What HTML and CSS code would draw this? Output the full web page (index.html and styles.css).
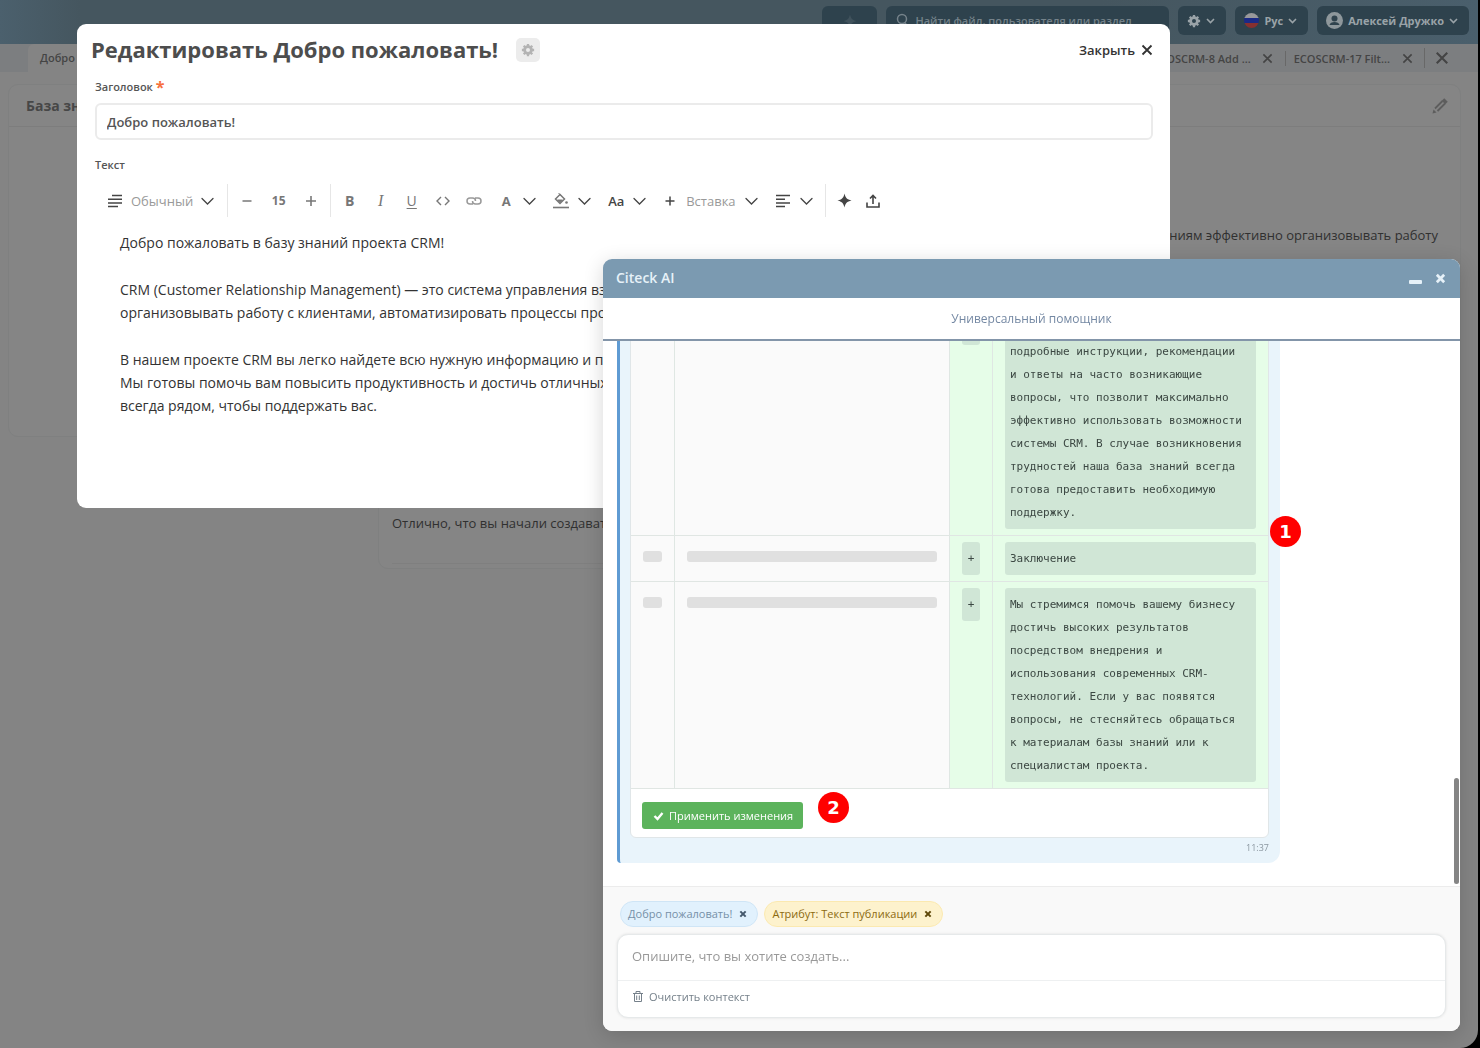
FILE: index.html
```html
<!DOCTYPE html>
<html lang="ru">
<head>
<meta charset="utf-8">
<meta name="viewport" content="width=device-width, initial-scale=1">
<title>Редактировать Добро пожаловать!</title>
<link rel="stylesheet" href="styles.css">
</head>
<body>
<svg class="sprite" aria-hidden="true">
  <symbol id="chevron" viewBox="0 0 13 13"><path d="M1 4.500l5.500 5.500L12 4.500" fill="none" stroke="currentColor" stroke-width="1.300" stroke-linecap="round"/></symbol>
  <symbol id="caret" viewBox="0 0 9 9"><path d="M1 3l3.500 3.500L8 3" fill="none" stroke="currentColor" stroke-width="1.600"/></symbol>
  <symbol id="cross" viewBox="0 0 12 12"><path d="M1.500 1.500l9 9M10.500 1.500l-9 9" fill="none" stroke="currentColor" stroke-width="1.800"/></symbol>
  <symbol id="boldcross" viewBox="0 0 12 12"><path d="M2 2l8 8M10 2l-8 8" fill="none" stroke="currentColor" stroke-width="3"/></symbol>
  <symbol id="star" viewBox="0 0 16 16"><path d="M8 0.500c1 4.500 2.500 6.400 7.500 7.500-5 1.100-6.500 3-7.500 7.500-1-4.500-2.500-6.400-7.500-7.500 5-1.100 6.500-3 7.500-7.500z" fill="currentColor"/></symbol>
  <symbol id="gear" viewBox="0 0 16 16"><circle cx="8" cy="8" r="3.900" fill="none" stroke="currentColor" stroke-width="3.200"/><path d="M8 1v3M8 12v3M1 8h3M12 8h3M3.100 3.100l2 2M10.900 10.900l2 2M12.900 3.100l-2 2M5.100 10.900l-2 2" stroke="currentColor" stroke-width="2.600"/></symbol>
</svg>

<div class="app">
  <header class="topbar">
    <button class="top-btn top-star" type="button" aria-label="Помощник"><svg width="14" height="14"><use href="#star"/></svg></button>
    <label class="search">
      <svg width="14" height="16" viewBox="0 0 14 16"><circle cx="7" cy="6" r="4.500" fill="none" stroke="currentColor" stroke-width="1.500"/><path d="M10 10l3 4" stroke="currentColor" stroke-width="1.500"/></svg>
      <input type="search" placeholder="Найти файл, пользователя или раздел" aria-label="Поиск">
    </label>
    <button class="top-btn" type="button" aria-label="Настройки"><svg width="14" height="14"><use href="#gear"/></svg><svg width="9" height="9"><use href="#caret"/></svg></button>
    <button class="top-btn" type="button"><svg width="15" height="15" viewBox="0 0 15 15"><clipPath id="round"><circle cx="7.500" cy="7.500" r="7.500"/></clipPath><g clip-path="url(#round)"><path d="M0 0h15v5H0z" fill="#98989a"/><path d="M0 5h15v5H0z" fill="#1b2a86"/><path d="M0 10h15v5H0z" fill="#863030"/></g></svg>Рус<svg width="9" height="9"><use href="#caret"/></svg></button>
    <button class="top-btn" type="button"><svg width="17" height="17" viewBox="0 0 17 17"><circle cx="8.500" cy="8.500" r="8.500" fill="#8e979b"/><circle cx="8.500" cy="6.500" r="3" fill="#30434d"/><path d="M3.500 13c.5-4 9.500-4 10 0z" fill="#30434d"/></svg>Алексей Дружко<svg width="9" height="9"><use href="#caret"/></svg></button>
  </header>

  <nav class="tabs" aria-label="Вкладки">
    <a class="tab tab-active" href="#">Добро пожаловать!</a>
    <span class="tabs-space"></span>
    <a class="tab" href="#">ECOSCRM-8 Add ...</a>
    <button class="tab-close" type="button" aria-label="Закрыть вкладку"><svg width="11" height="11"><use href="#cross"/></svg></button>
    <a class="tab tab-divided" href="#">ECOSCRM-17 Filt...</a>
    <button class="tab-close" type="button" aria-label="Закрыть вкладку"><svg width="11" height="11"><use href="#cross"/></svg></button>
    <button class="tab-close tab-close-all" type="button" aria-label="Закрыть все"><svg width="14" height="14"><use href="#cross"/></svg></button>
  </nav>

  <main class="board">
    <section class="tile tile-side">
      <h2 class="tile-head">База знаний</h2>
    </section>
    <section class="tile tile-main">
      <div class="tile-head tile-head-end">
        <button class="edit" type="button" aria-label="Редактировать"><svg width="16" height="16" viewBox="0 0 16 16" fill="none" stroke="currentColor"><path d="M3 10.500L10.500 3M5.500 13L13 5.500" stroke-width="1.800"/><path d="M11 1.500l3.500 3.500" stroke-width="3.500"/><path d="M.5 15.500l1-4 3 3z" fill="currentColor" stroke="none"/></svg></button>
      </div>
      <p class="tile-lead">CRM — это система управления взаимоотношениями с клиентами, которая помогает компаниям эффективно организовывать работу</p>
      <p class="tile-note">Отлично, что вы начали создавать базу знаний</p>
    </section>
  </main>
</div>

<div class="modal" role="dialog" aria-labelledby="modal-title">
  <div class="modal-head">
    <h1 class="modal-title" id="modal-title">Редактировать Добро пожаловать!</h1>
    <button class="modal-gear" type="button" aria-label="Настройки формы"><svg width="14" height="14"><use href="#gear"/></svg></button>
    <button class="modal-close" type="button">Закрыть<svg width="12" height="12"><use href="#cross"/></svg></button>
  </div>
  <label class="field-label" for="title-field">Заголовок <span class="required">*</span></label>
  <input class="field" id="title-field" type="text" value="Добро пожаловать!">
  <div class="field-label text-label" id="text-label">Текст</div>

  <div class="toolbar" role="toolbar" aria-label="Форматирование">
    <button class="menu menu-block" type="button"><svg class="dark" width="16" height="14" viewBox="0 0 16 14"><path d="M5 1.500h10M1 5.200h14M1 8.900h14M1 12.500h10" stroke="currentColor" stroke-width="1.500"/></svg><span class="menu-text">Обычный</span><svg class="dark" width="13" height="13"><use href="#chevron"/></svg></button>
    <div class="sizes">
      <button class="tool" type="button" aria-label="Уменьшить"><svg width="10" height="10" viewBox="0 0 10 10"><path d="M0.500 5h9" stroke="currentColor" stroke-width="1.700"/></svg></button>
      <input class="size" type="text" value="15" aria-label="Размер шрифта">
      <button class="tool" type="button" aria-label="Увеличить"><svg width="10" height="10" viewBox="0 0 10 10"><path d="M0 5h10M5 0v10" stroke="currentColor" stroke-width="1.600"/></svg></button>
    </div>
    <div class="tools">
      <button class="tool" type="button">B</button>
      <button class="tool tool-italic" type="button">I</button>
      <button class="tool tool-under" type="button">U</button>
      <button class="tool" type="button" aria-label="Код"><svg width="14" height="10" viewBox="0 0 14 10"><path d="M5 1L1 5l4 4M9 1l4 4-4 4" fill="none" stroke="currentColor" stroke-width="1.400"/></svg></button>
      <button class="tool tool-light" type="button" aria-label="Ссылка"><svg width="16" height="10" viewBox="0 0 16 10"><path d="M7 8H4a3 3 0 0 1 0-6h2.500a3 3 0 0 1 3 3M9 2h3a3 3 0 0 1 0 6H9.500a3 3 0 0 1-3-3" fill="none" stroke="currentColor" stroke-width="1.500"/></svg></button>
    </div>
    <div class="menus">
      <button class="menu" type="button" aria-label="Цвет текста"><span class="glyph glyph-bold">A</span><svg class="dark" width="13" height="13"><use href="#chevron"/></svg></button>
      <button class="menu" type="button" aria-label="Цвет фона"><svg width="16" height="17" viewBox="0 0 16 17"><path d="M7 2.500l4.500 4.500L7 11.500 2.500 7z" fill="none" stroke="currentColor" stroke-width="1.500"/><path d="M5.500 1L8 3.500M4.500 8h5L7 10.500z" fill="currentColor" stroke="currentColor"/><circle cx="13.500" cy="10.500" r="1.300" fill="currentColor"/><path d="M0 15.500h16" stroke="currentColor" stroke-width="1.600"/></svg><svg class="dark" width="13" height="13"><use href="#chevron"/></svg></button>
      <button class="menu" type="button" aria-label="Регистр"><span class="glyph dark">Aa</span><svg class="dark" width="13" height="13"><use href="#chevron"/></svg></button>
      <button class="menu" type="button"><svg class="dark" width="14" height="14" viewBox="0 0 14 14"><path d="M7 2.500v9M2.500 7h9" stroke="currentColor" stroke-width="1.500"/></svg><span class="menu-text">Вставка</span><svg class="dark" width="13" height="13"><use href="#chevron"/></svg></button>
      <button class="menu" type="button" aria-label="Выравнивание"><svg class="dark" width="16" height="14" viewBox="0 0 16 14"><path d="M1 1.500h14M1 5.200h9M1 8.900h14M1 12.500h9" stroke="currentColor" stroke-width="1.500"/></svg><svg class="dark" width="13" height="13"><use href="#chevron"/></svg></button>
    </div>
    <div class="extras">
      <button class="tool tool-narrow dark" type="button" aria-label="AI"><svg width="15" height="15"><use href="#star"/></svg></button>
      <button class="tool tool-narrow dark" type="button" aria-label="Загрузить"><svg width="14" height="14" viewBox="0 0 14 14"><path d="M7 10V2M4 4.500l3-3 3 3M1 8.500V13h12V8.500" fill="none" stroke="currentColor" stroke-width="1.600"/></svg></button>
    </div>
  </div>

  <div class="editor" role="textbox" contenteditable="true" aria-labelledby="text-label">
    <p>Добро пожаловать в базу знаний проекта CRM!</p>
    <p>CRM (Customer Relationship Management) — это система управления взаимоотношениями с клиентами, которая помогает<br>организовывать работу с клиентами, автоматизировать процессы продаж и маркетинга.</p>
    <p>В нашем проекте CRM вы легко найдете всю нужную информацию и полезные инструкции.<br>Мы готовы помочь вам повысить продуктивность и достичь отличных результатов. Наша команда<br>всегда рядом, чтобы поддержать вас.</p>
  </div>
</div>

<section class="ai" role="dialog" aria-labelledby="ai-title">
  <header class="ai-head">
    <h2 class="ai-title" id="ai-title">Citeck AI</h2>
    <button class="ai-ctl" type="button" aria-label="Свернуть"><svg width="13" height="12" viewBox="0 0 13 12"><rect y="7" width="13" height="4" rx="1" fill="currentColor"/></svg></button>
    <button class="ai-ctl" type="button" aria-label="Закрыть"><svg width="11" height="11"><use href="#boldcross"/></svg></button>
  </header>
  <div class="ai-mode">Универсальный помощник</div>

  <div class="ai-log">
    <article class="message">
      <div class="diff">
        <table class="diff-table">
          <tbody>
            <tr>
              <td class="old"></td>
              <td class="old"></td>
              <td class="new"><span class="added sign">+</span></td>
              <td class="new"><span class="added">На страницах базы знаний вы найдёте подробные инструкции, рекомендации и ответы на часто возникающие вопросы, что позволит максимально эффективно использовать возможности системы CRM. В случае возникновения трудностей наша база знаний всегда готова предоставить необходимую поддержку.</span></td>
            </tr>
            <tr>
              <td class="old"><span class="blank"></span></td>
              <td class="old"><span class="blank"></span></td>
              <td class="new"><span class="added sign">+</span></td>
              <td class="new"><span class="added">Заключение</span></td>
            </tr>
            <tr>
              <td class="old"><span class="blank"></span></td>
              <td class="old"><span class="blank"></span></td>
              <td class="new"><span class="added sign">+</span></td>
              <td class="new"><span class="added">Мы стремимся помочь вашему бизнесу достичь высоких результатов посредством внедрения и использования современных CRM-технологий. Если у вас появятся вопросы, не стесняйтесь обращаться к материалам базы знаний или к специалистам проекта.</span></td>
            </tr>
          </tbody>
        </table>
        <div class="diff-actions">
          <button class="apply" type="button"><svg width="11" height="10" viewBox="0 0 11 10"><path d="M1.500 5l3 3 5-6" fill="none" stroke="currentColor" stroke-width="2.400"/></svg>Применить изменения</button>
        </div>
      </div>
      <time class="time">11:37</time>
    </article>
    <span class="thumb"></span>
  </div>

  <footer class="ai-foot">
    <div class="chips">
      <span class="chip chip-doc">Добро пожаловать!<button class="chip-x" type="button" aria-label="Убрать"><svg width="8" height="8"><use href="#boldcross"/></svg></button></span>
      <span class="chip chip-attr">Атрибут: Текст публикации<button class="chip-x" type="button" aria-label="Убрать"><svg width="8" height="8"><use href="#boldcross"/></svg></button></span>
    </div>
    <div class="composer">
      <textarea class="prompt" rows="1" placeholder="Опишите, что вы хотите создать..." aria-label="Запрос"></textarea>
      <div class="composer-bar">
        <button class="clear" type="button"><svg width="10" height="11" viewBox="0 0 10 11" fill="none" stroke="currentColor"><path d="M0 2.500h10M3 2V.500h4V2M1.500 3v7.500h7V3M3.700 4.500v4.500M6.300 4.500v4.500"/></svg>Очистить контекст</button>
      </div>
    </div>
  </footer>
</section>

<span class="marker marker-one">1</span>
<span class="marker marker-two">2</span>
</body>
</html>
```

FILE: styles.css
```css
* { box-sizing: border-box; }

body {
  margin: 0;
  background: #000;
  font-family: "Open Sans", "Noto Sans", sans-serif;
  font-size: 13px;
  color: #333;
}

button, input, textarea {
  font: inherit;
  color: inherit;
  margin: 0;
  padding: 0;
  border: 0;
  background: none;
}

h1, h2, p { margin: 0; }
svg { display: block; flex: none; }
.sprite { position: absolute; width: 0; height: 0; }

/* Page under the dialogs */
.app {
  margin-right: 2px;
  min-height: 100vh;
  background: #848484;
  border-radius: 0 0 18px 0;
  overflow: hidden;
}

.topbar {
  display: flex;
  justify-content: flex-end;
  align-items: flex-start;
  gap: 9px;
  height: 44px;
  padding: 6px 9px 0 0;
  background: linear-gradient(90deg, #4b606d, #45565f 80px, #45565f 1100px, #4a5f6c);
}

.top-btn, .search {
  display: flex;
  align-items: center;
  gap: 5px;
  height: 29px;
  padding: 0 11px 0 9px;
  border-radius: 6px;
  background: #2e424d;
  color: #9aa3a8;
  font-size: 11px;
  font-weight: 700;
}

.top-star { justify-content: center; width: 55px; padding: 0; color: #40525c; }
.search { width: 283px; gap: 6px; color: #75828a; font-weight: 600; }
.search input { flex: 1; min-width: 0; }
.search input::placeholder { color: #75828a; opacity: 1; }

.tabs {
  display: flex;
  align-items: center;
  height: 28px;
  padding: 0 20px 0 28px;
  background: #7c7e80;
  font-size: 11px;
  font-weight: 600;
  color: #444;
}

.tab { color: inherit; text-decoration: none; white-space: nowrap; }
.tab-active {
  align-self: stretch;
  padding: 6px 12px;
  background: #848484;
  border-radius: 6px 6px 0 0;
}
.tabs-space { flex: 1; }
.tab-divided { padding-left: 8px; border-left: 1px solid #686868; }
.tab-close { width: 34px; display: grid; place-items: center; }
.tab-close-all { border-left: 1px solid #686868; height: 20px; }

.board {
  display: grid;
  grid-template-columns: 362px 1fr;
  align-items: start;
  gap: 8px;
  padding: 12px 17px 0 8px;
}

.tile {
  border: 1px solid #7f8080;
  border-radius: 10px;
  background: #858585;
}
.tile-side { height: 353px; }
.tile-main { height: 485px; }
.tile-head {
  display: flex;
  align-items: center;
  height: 42px;
  padding: 0 12px 0 17px;
  border-bottom: 1px solid #7d7d7d;
  font-size: 14px;
  font-weight: 700;
  color: #474747;
}
.tile-head-end { justify-content: flex-end; }
.edit { color: #5d5d5d; }
.tile-lead {
  padding: 96px 22px 0 13px;
  text-align: right;
  white-space: nowrap;
  line-height: 24px;
  color: #303030;
}
.tile-note {
  margin: 264px 13px 0;
  padding-bottom: 28px;
  border-bottom: 1px solid #7f7f7f;
  line-height: 24px;
  color: #303030;
}

/* Edit dialog */
.modal {
  position: fixed;
  left: 77px;
  right: 310px;
  top: 24px;
  min-height: 484px;
  padding: 12px 17px 0 18px;
  border-radius: 9px;
  background: #fff;
  overflow: hidden;
}

.modal-head { display: flex; align-items: center; gap: 18px; height: 28px; margin-left: -4px; }
.modal-title { padding-bottom: 2px; font-size: 22px; line-height: 28px; color: #4d4d4d; }
.modal-gear {
  display: grid;
  place-items: center;
  width: 24px;
  height: 24px;
  border-radius: 5px;
  background: #ececec;
  color: #b3b3b3;
}
.modal-close {
  display: flex;
  align-items: center;
  gap: 6px;
  margin-left: auto;
  font-weight: 600;
  color: #333;
}

.field-label {
  display: block;
  margin-top: 14px;
  font-size: 11px;
  line-height: 18px;
  font-weight: 600;
  color: #555;
}
.required { color: #f7703c; font-size: 16px; line-height: 16px; vertical-align: -2px; font-weight: 700; }
.field {
  width: 100%;
  height: 37px;
  margin-top: 7px;
  padding: 0 10px;
  border: 2px solid #ebebeb;
  border-radius: 6px;
  font-weight: 600;
  color: #555;
}
.text-label { margin-top: 16px; }

.toolbar {
  display: flex;
  align-items: center;
  height: 33px;
  margin-top: 10px;
  padding-left: 12px;
  color: #777;
}
.tool {
  display: grid;
  place-items: center;
  width: 31px;
  height: 28px;
  font-size: 14px;
  font-weight: 700;
}
.tool-narrow { width: 28px; }
.tool-light { color: #999; }
.tool-italic { font-family: "Liberation Serif", serif; font-style: italic; font-weight: 400; font-size: 16px; }
.tool-under { font-weight: 400; text-decoration: underline; text-underline-offset: 2px; }
.size { width: 33px; text-align: center; font-weight: 700; font-size: 12px; }
.sizes, .tools, .extras { display: flex; align-items: center; height: 33px; border-left: 1px solid #e6e6e6; }
.sizes { padding: 0 4px 0 3px; }
.tools { padding: 0 9px 0 3px; }
.extras { padding-left: 5px; }
.menus { display: flex; gap: 17px; padding-right: 12px; }
.menu { display: flex; align-items: center; gap: 9px; height: 28px; }
.menu-block { gap: 8px; margin-right: 13px; }
.menu-text { color: #999; }
.glyph { width: 16px; text-align: center; font-weight: 600; }
.glyph-bold { font-weight: 700; }
.dark { color: #444; }

.editor {
  padding: 14px 25px 0;
  white-space: nowrap;
  font-size: 14px;
  line-height: 23px;
  color: #333;
  outline: none;
}
.editor p + p { margin-top: 24px; }

/* Assistant window */
.ai {
  position: fixed;
  right: 20px;
  bottom: 17px;
  display: flex;
  flex-direction: column;
  width: 857px;
  max-width: calc(100vw - 40px);
  height: calc(100vh - 276px);
  border-radius: 9px;
  background: #fff;
  overflow: hidden;
  box-shadow: 0 4px 20px rgba(0, 0, 0, 0.16);
}
.ai-head {
  display: flex;
  align-items: center;
  gap: 13px;
  height: 39px;
  padding: 0 14px 0 13px;
  background: #7b9ab1;
  color: #e6f1f8;
}
.ai-title { flex: 1; padding-bottom: 2px; font-size: 14px; font-weight: 600; }
.ai-mode {
  height: 43px;
  border-bottom: 2px solid #8395a9;
  line-height: 41px;
  text-align: center;
  font-size: 12px;
  color: #7488a3;
}
.ai-log {
  position: relative;
  flex: 1;
  min-height: 0;
  display: flex;
  flex-direction: column;
  justify-content: flex-end;
  padding: 0 180px 23px 14px;
  overflow: hidden;
}
.thumb {
  position: absolute;
  right: 1px;
  bottom: 2px;
  width: 5px;
  height: 106px;
  border-radius: 3px;
  background: #858585;
}

.message {
  padding: 0 11px 9px 10px;
  border-left: 3px solid #5f9bd3;
  border-radius: 4px 12px 12px 4px;
  background: #e9f4fb;
}
.diff {
  border: 1px solid #e0e6e8;
  border-radius: 6px;
  background: #fff;
  overflow: hidden;
}
.diff-table {
  width: 100%;
  border-collapse: collapse;
  table-layout: fixed;
  font-family: "DejaVu Sans Mono", monospace;
  font-size: 11px;
  line-height: 23px;
  color: #3c4843;
}
.diff-table td { padding: 6px 12px; border-bottom: 1px solid #e0e6e3; vertical-align: top; }
.diff-table td + td { border-left: 1px solid #dfe7e3; }
.diff-table td:nth-child(1), .diff-table td:nth-child(3) { width: 43px; }
.old { background: #fafafa; }
.new { background: #e6fde8; }
.blank { display: block; height: 11px; margin-top: 9px; border-radius: 3px; background: #e0e0e0; }
.added { display: block; padding: 5px 9px 5px 5px; border-radius: 3px; background: #d0e6d6; }
.sign { padding: 5px 0; text-align: center; }

.diff-actions { padding: 13px 11px 8px; }
.apply {
  display: flex;
  align-items: center;
  gap: 5px;
  height: 27px;
  padding: 0 10px 0 11px;
  border-radius: 3px;
  background: #5cb35c;
  color: #fff;
  font-size: 11px;
  font-weight: 500;
}
.time { display: block; margin-top: 4px; text-align: right; font-size: 9px; line-height: 12px; color: #8b97a0; }

.ai-foot { padding: 14px 14px 13px; border-top: 1px solid #ececec; background: #f9f9f9; }
.chips { display: flex; gap: 6px; padding: 0 3px; }
.chip {
  display: flex;
  align-items: center;
  gap: 4px;
  height: 26px;
  padding: 0 7px 1px;
  border: 1px solid #cfe5f6;
  border-radius: 13px;
  font-size: 11px;
  font-weight: 500;
}
.chip-doc { background: #e1f1fd; color: #7690a8; }
.chip-attr { background: #fdf2cd; border-color: #fbe9b0; color: #8c6a10; }
.chip-x { display: grid; place-items: center; width: 14px; height: 14px; border-radius: 7px; color: #44586c; }
.chip-attr .chip-x { color: #5e4708; }

.composer {
  margin-top: 7px;
  border: 1px solid #e6e9ea;
  border-radius: 11px;
  background: #fff;
  box-shadow: 0 0 3px rgba(0, 0, 0, 0.1);
}
.prompt {
  display: block;
  width: 100%;
  height: 45px;
  padding: 11px 14px;
  line-height: 20px;
  resize: none;
  outline: none;
}
.prompt::placeholder { color: #999; opacity: 1; }
.composer-bar { height: 37px; padding: 0 15px; border-top: 1px solid #eef0f1; }
.clear { display: flex; align-items: center; gap: 6px; height: 31px; font-size: 11px; color: #75808a; }

/* Numbered callouts */
.marker {
  position: fixed;
  display: grid;
  place-items: center;
  width: 31px;
  height: 31px;
  border-radius: 50%;
  background: #f00;
  color: #fff;
  font: 700 18px/31px "DejaVu Sans", sans-serif;
}
.marker-one { right: 179px; bottom: 501px; }
.marker-two { right: 631px; bottom: 225px; }
```
